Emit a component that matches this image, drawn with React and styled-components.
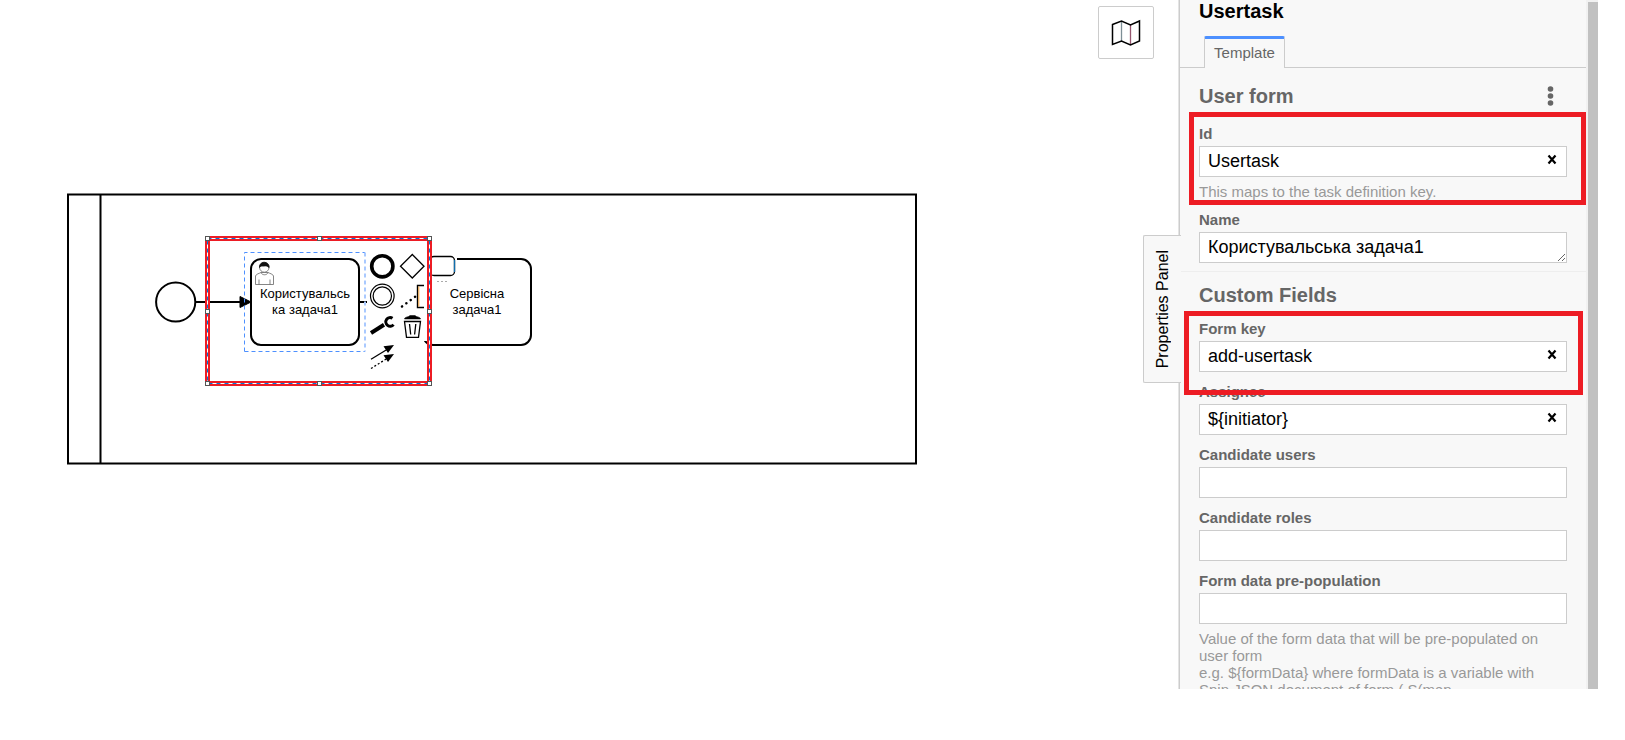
import React from "react";
import styled, { createGlobalStyle, css } from "styled-components";

const GlobalStyle = createGlobalStyle`
  *, *::before, *::after { box-sizing: border-box; }
  body { margin: 0; background: #fff; font-family: "Liberation Sans", Arial, sans-serif; color: #000; }
  button, input, textarea { font: inherit; color: inherit; }
`;

const Modeler = styled.main`
  display: flex;
  height: calc(100vh - 51px);
  margin-right: 27px;
`;

const Canvas = styled.section`
  position: relative;
  flex: 1;
  min-width: 0;
  overflow: hidden;
  display: flex;
  justify-content: flex-end;
  align-items: flex-start;
  padding: 6px 25px 0 0;
`;

const Layer = styled.svg`
  position: absolute;
  inset: 0;
  width: 100%;
  height: 100%;
  pointer-events: none;
  font-size: 13px;
`;

const MapButton = styled.button`
  position: relative;
  display: grid;
  place-items: center;
  width: 56px;
  height: 53px;
  padding: 0;
  border: 1px solid #ccc;
  border-radius: 2px;
  background: #fff;
`;

const ContextPad = styled.div`
  position: absolute;
  left: 367px;
  top: 251px;
  display: grid;
  grid-template-columns: repeat(3, 30px);
  grid-auto-rows: 30px;
`;

const PadButton = styled.button`
  grid-column: ${(p) => p.$col};
  grid-row: ${(p) => p.$row};
  width: 30px;
  height: 30px;
  padding: 0;
  border: 0;
  background: #fff;

  svg { display: block; }
`;

const Panel = styled.aside`
  position: relative;
  display: flex;
  flex: none;
  width: 419px;
  border-left: 1px solid #ccc;
  box-shadow: -1px 0 0 #e4e4e4;
  background: #f8f8f8;
`;

const PanelToggle = styled.button`
  position: absolute;
  left: -37px;
  top: 235px;
  width: 38px;
  height: 148px;
  padding: 0;
  border: 1px solid #ccc;
  border-right: 0;
  border-radius: 2px 0 0 2px;
  background: #f8f8f8;
  display: grid;
  place-items: center;
  font-size: 16px;

  span { writing-mode: vertical-rl; transform: rotate(180deg); }
`;

const PanelBody = styled.div`
  flex: 1;
  min-width: 0;
  overflow: hidden;
`;

const ScrollTrack = styled.div`
  flex: none;
  width: 12px;
  padding: 2px 0 0 2px;
  background: #f1f1f1;

  &::after { content: ""; display: block; height: 100%; background: #c1c1c1; }
`;

const ElementTitle = styled.h1`
  margin: 0;
  padding-left: 19px;
  font-size: 20px;
  line-height: 22px;
`;

const TabBar = styled.nav`
  display: flex;
  margin-top: 14px;
  padding-left: 24px;
  border-bottom: 1px solid #ccc;
`;

const Tab = styled.a`
  width: 81px;
  height: 32px;
  margin-bottom: -1px;
  border: 1px solid #ccc;
  border-top: 3px solid #4d90ff;
  border-bottom: 0;
  border-radius: 2px 2px 0 0;
  background: #f8f8f8;
  color: #666;
  font-size: 15px;
  line-height: 28px;
  text-align: center;
  text-decoration: none;
`;

const Group = styled.section`
  padding: ${(p) => (p.$divided ? "13px" : "18px")} 19px 8px;
  ${(p) => p.$divided && css`border-top: 1px solid #eee;`}
`;

const GroupHeader = styled.header`
  display: flex;
  align-items: center;
  justify-content: space-between;
  height: 20px;
  margin-bottom: ${(p) => p.$gap}px;
  padding-right: 12px;
`;

const GroupTitle = styled.h2`
  margin: 0;
  color: #666;
  font-size: 20px;
  line-height: 20px;
`;

const IconButton = styled.button`
  display: block;
  padding: 0;
  border: 0;
  background: none;

  svg { display: block; }
`;

const FieldBox = styled.div`
  position: relative;
  padding-top: 11px;
`;

const Label = styled.label`
  display: block;
  margin-bottom: 3px;
  color: #666;
  font-size: 15px;
  font-weight: bold;
  line-height: 18px;
`;

const control = css`
  display: block;
  width: 100%;
  height: 31px;
  border: 1px solid #ccc;
  border-radius: 0;
  background: #fff;
  outline: 0;
  font-size: 18px;
`;

const TextInput = styled.input`
  ${control}
  padding: 0 30px 0 8px;
`;

const TextArea = styled.textarea`
  ${control}
  padding: 4px 8px;
  line-height: 20px;
  overflow: hidden;
  resize: both;
`;

const InputWrap = styled.div`
  position: relative;
`;

const ClearButton = styled(IconButton)`
  position: absolute;
  right: 10px;
  top: 8px;
`;

const Hint = styled.p`
  margin: 6px 0 0;
  color: #999;
  font-size: 15px;
  line-height: 17px;
  white-space: pre-line;
`;

const Marker = styled.div`
  position: absolute;
  inset: ${(p) => p.$inset};
  border: 5px solid #ed1c24;
  pointer-events: none;
  z-index: 1;
`;

function Field({ id, label, value = "", hint, multiline, marker }) {
  return (
    <FieldBox>
      <Label htmlFor={id}>{label}</Label>
      <InputWrap>
        {multiline ? (
          <TextArea id={id} rows={1} defaultValue={value} spellCheck={false} />
        ) : (
          <TextInput id={id} type="text" defaultValue={value} spellCheck={false} />
        )}
        {value && !multiline && (
          <ClearButton type="button" aria-label={`Clear ${label}`}>
            <svg width="10" height="11" viewBox="0 0 10 11">
              <path d="M1.500 1.500l7 8M8.500 1.500l-7 8" stroke="#000" strokeWidth="2.200" />
            </svg>
          </ClearButton>
        )}
      </InputWrap>
      {hint && <Hint>{hint}</Hint>}
      {marker && <Marker $inset={marker} />}
    </FieldBox>
  );
}

function Diagram() {
  return (
    <Layer aria-label="Process diagram">
      <g fill="#fff" stroke="#000" strokeWidth="2">
        <rect x="68" y="194.5" width="848" height="269" />
        <path d="M100.5 194v269" />
        <circle cx="175.7" cy="302" r="19.6" />
        <path d="M196 302h46M360 302h7" />
        <path d="M240 296.5l11 5.5-11 5.5z" fill="#000" stroke="#000" strokeWidth="1" />
        <rect x="251" y="259" width="108" height="86" rx="10" />
        <rect x="423" y="259" width="108" height="86" rx="10" />
      </g>
      <path d="M244.5 351.5v-99H365M244.5 351.5H365" fill="none" stroke="#4d90ff" strokeDasharray="4 3" />
      <path d="M365 252.5v99" stroke="#a9c9ff" strokeWidth="2" strokeDasharray="4 3" />
      <path d="M437 281.5h10" stroke="#aaa" strokeDasharray="2 2" />
      <g fill="#fff" stroke="#666" strokeWidth="0.8">
        <path d="M255.500 284.500v-8.500c.5-2 4-2.600 5.500-3.500h7c1.500.9 5 1.500 5.500 3.500v8.500z" />
        <path d="M259 284.500v-5M270 284.500v-5M261 272.500c1 3 6 3 7 0" fill="none" />
        <circle cx="264.300" cy="267.500" r="4.700" />
        <path d="M259.500 267.500c-.5-7 10-7 9.600 0-2-1.500-3-1.800-5-1.500-2 .3-3-.5-4.600 1.500z" fill="#111" stroke="#111" />
      </g>
      <g textAnchor="middle" fill="#000">
        <text x="305" y="298">Користувальсь</text>
        <text x="305" y="314">ка задача1</text>
        <text x="477" y="298">Сервісна</text>
        <text x="477" y="314">задача1</text>
      </g>
    </Layer>
  );
}

const padEntries = [
  { name: "Append end event", col: 1, row: 1, art: <circle cx="15.300" cy="15.300" r="10.600" strokeWidth="3.600" /> },
  { name: "Append gateway", col: 2, row: 1, art: <path d="M15.300 3.500L27 15.300 15.300 27 3.500 15.300z" strokeWidth="1.300" /> },
  {
    name: "Append task", col: 3, row: 1,
    art: (
      <g strokeWidth="1.300">
        <rect x="3" y="5.500" width="24.500" height="19" rx="4" />
        <path d="M27.500 9v12" stroke="#0f6fae" />
      </g>
    ),
  },
  {
    name: "Append intermediate event", col: 1, row: 2,
    art: <g strokeWidth="1.200"><circle cx="15.300" cy="15" r="11.800" /><circle cx="15.300" cy="15" r="9.200" /></g>,
  },
  {
    name: "Append text annotation", col: 2, row: 2,
    art: (
      <g>
        <path d="M5 25.500l13.500-10" strokeWidth="2.500" strokeDasharray="0.1 5.300" strokeLinecap="round" />
        <path d="M27 4.500h-6.500v22H27" strokeWidth="1.400" />
        <path d="M21.800 5.500v20" stroke="#f3a23a" strokeWidth="1" />
      </g>
    ),
  },
  {
    name: "Change type", col: 1, row: 3,
    art: (
      <g>
        <path d="M4 22L17 13.800" strokeWidth="4" />
        <path d="M25.500 7.300A4.300 4.300 0 1 0 26.500 13.600" strokeWidth="3" />
      </g>
    ),
  },
  {
    name: "Remove", col: 2, row: 3,
    art: (
      <g strokeWidth="1.300">
        <path d="M7.500 10.500h16L21.500 26.300h-12z" />
        <path d="M12.500 13l1.200 10.500M18.800 13l-1.200 10.500" />
        <path d="M7.500 8c0-1.500 2-2 4-2.500l1.500-1h5l1.500 1c2 .5 4 1 4 2.500z" fill="#000" strokeWidth="0.500" />
      </g>
    ),
  },
  {
    name: "Connect", col: 1, row: 4,
    art: (
      <g strokeWidth="1.300">
        <path d="M4 18.300L20 8.500" />
        <path d="M4 27.500L20 17.500" strokeDasharray="2 2" />
        <path d="M27 4l-6 8-4.500-6.800zM27 13l-6 8-4.500-6.800z" fill="#000" stroke="none" />
      </g>
    ),
  },
];

const handles = [207.5, 319.5, 429.5].flatMap((x) =>
  [238.5, 311.5, 383.5].map((y) => [x, y])
).filter(([x, y]) => x !== 319.5 || y !== 311.5);

function SelectionFrame() {
  return (
    <Layer aria-hidden="true">
      <g fill="none">
        <rect x="207.500" y="238.500" width="222" height="145" stroke="#ed1c24" strokeWidth="5" />
        <rect x="207.500" y="238.500" width="222" height="145" stroke="#fff" />
        <rect x="207.500" y="238.500" width="222" height="145" stroke="#0078d7" strokeDasharray="4 4" />
      </g>
      {handles.map(([x, y]) => (
        <rect key={`${x}-${y}`} x={x - 2} y={y - 2} width="4" height="4" fill="#fff" stroke="#555" />
      ))}
    </Layer>
  );
}

export default function App() {
  return (
    <>
      <GlobalStyle />
      <Modeler>
        <Canvas>
          <Diagram />
          <ContextPad>
            {padEntries.map(({ name, col, row, art }) => (
              <PadButton key={name} type="button" aria-label={name} $col={col} $row={row}>
                <svg width="30" height="30" viewBox="0 0 30 30" fill="none" stroke="#000">{art}</svg>
              </PadButton>
            ))}
          </ContextPad>
          <SelectionFrame />
          <MapButton type="button" aria-label="Toggle minimap">
            <svg width="32" height="28" viewBox="0 0 32 28" fill="none" stroke="#000" strokeWidth="1.500">
              <path d="M11.500 2v20" stroke="#7d8f96" strokeWidth="1.300" />
              <path d="M20.500 6v20" stroke="#96566f" strokeWidth="1.300" />
              <path d="M2.500 5.500L11.500 2l9 4 9-4v20l-9 4-9-4-9 3.500z" />
            </svg>
          </MapButton>
        </Canvas>
        <Panel>
          <PanelToggle type="button"><span>Properties Panel</span></PanelToggle>
          <PanelBody>
            <ElementTitle>Usertask</ElementTitle>
            <TabBar>
              <Tab href="#template">Template</Tab>
            </TabBar>
            <Group id="template">
              <GroupHeader $gap={8}>
                <GroupTitle>User form</GroupTitle>
                <IconButton type="button" aria-label="Template options">
                  <svg width="9" height="20" viewBox="0 0 9 20" fill="#666">
                    <circle cx="4.500" cy="3" r="2.800" />
                    <circle cx="4.500" cy="10" r="2.800" />
                    <circle cx="4.500" cy="17" r="2.800" />
                  </svg>
                </IconButton>
              </GroupHeader>
              <Field
                id="task-id"
                label="Id"
                value="Usertask"
                hint="This maps to the task definition key."
                marker="-2px -19px -5px -10px"
              />
              <Field id="task-name" label="Name" value="Користувальська задача1" multiline />
            </Group>
            <Group $divided>
              <GroupHeader $gap={4}>
                <GroupTitle>Custom Fields</GroupTitle>
              </GroupHeader>
              <Field id="form-key" label="Form key" value="add-usertask" marker="2px -16px -23px -15px" />
              <Field id="assignee" label="Assignee" value="${initiator}" />
              <Field id="candidate-users" label="Candidate users" />
              <Field id="candidate-roles" label="Candidate roles" />
              <Field
                id="prepopulation"
                label="Form data pre-population"
                hint={"Value of the form data that will be pre-populated on user form\ne.g. ${formData} where formData is a variable with Spin JSON document of form ( S(map"}
              />
            </Group>
          </PanelBody>
          <ScrollTrack />
        </Panel>
      </Modeler>
    </>
  );
}
